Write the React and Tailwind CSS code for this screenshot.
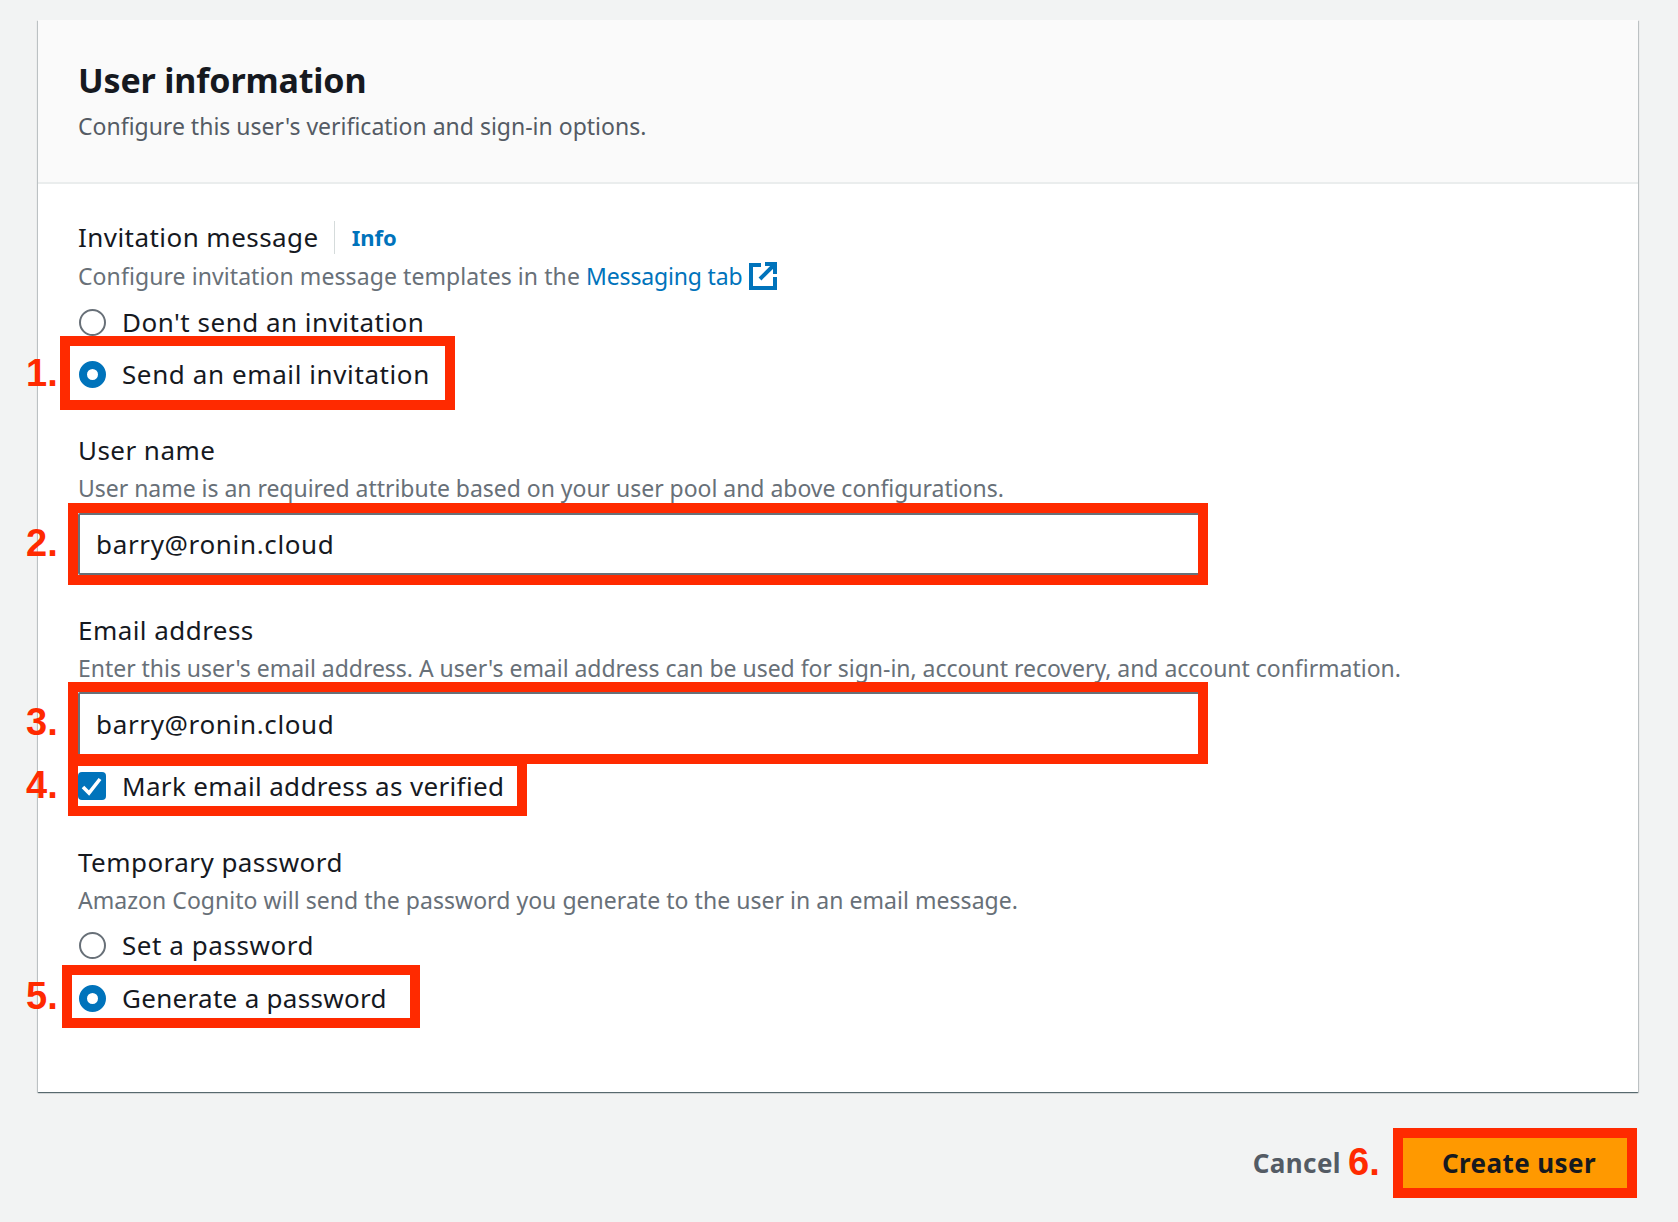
const font = "[font-family:'Noto_Sans',sans-serif]";

function Radio({ checked, label, className }) {
  return (
    <div className={`flex items-center h-9 text-[#16191f] text-[26px] ${className}`}>
      {checked ? (
        <span className="ml-px w-[27px] h-[27px] rounded-full border-[8px] border-[#0073bb] bg-white shrink-0" />
      ) : (
        <span className="ml-px w-[27px] h-[27px] rounded-full border-2 border-[#687078] bg-white shrink-0" />
      )}
      <span className="ml-4 leading-9">{label}</span>
    </div>
  );
}

function Label({ children, className }) {
  return <div className={`h-9 text-[#16191f] text-[26px] leading-9 tracking-[0.45px] ${className}`}>{children}</div>;
}

function Desc({ children, className }) {
  return <div className={`h-9 text-[#687078] text-[23px] leading-9 ${className}`}>{children}</div>;
}

function Field({ value, className }) {
  return (
    <div className={`w-[1122px] border-2 border-[#687078] rounded-[2px] bg-white pl-4 flex items-center text-[#16191f] text-[26px] tracking-[0.65px] ${className}`}>
      {value}
    </div>
  );
}

function Frame({ className }) {
  return <div className={`absolute border-[10px] border-[#ff2a00] ${className}`} />;
}

function Num({ children, className }) {
  return (
    <div className={`absolute text-[#ff2a00] font-bold text-[38px] leading-none [font-family:'Liberation_Sans',sans-serif] ${className}`}>
      {children}
    </div>
  );
}

export default function App() {
  return (
    <div className={`relative min-h-[1222px] bg-[#f2f3f3] pt-5 pl-[38px] pr-10 ${font}`}>
      <section className="bg-white shadow-[0_1px_1px_0_rgba(0,28,36,0.5),1px_1px_1px_0_rgba(0,28,36,0.15),-1px_1px_1px_0_rgba(0,28,36,0.15)]">
        <header className="h-[164px] bg-[#fafafa] border-b-2 border-[#eaeded] px-10 pt-[38px]">
          <h1 className="text-[34px] leading-[44px] font-bold text-[#16191f] tracking-[-0.15px]">User information</h1>
          <p className="mt-[6px] text-[23px] leading-9 text-[#545b64]">Configure this user's verification and sign-in options.</p>
        </header>
        <div className="px-10 pt-[35px] pb-[76px]">
          <Label className="flex items-center">
            <span>Invitation message</span>
            <span className="ml-[15px] mr-[17px] w-px h-[33px] bg-[#d5dbdb]" />
            <span className="text-[#0073bb] font-bold text-[22px] tracking-normal">Info</span>
          </Label>
          <Desc className="mt-[3px] flex items-center">
            <span className="tracking-[0.08px]">Configure invitation message templates in the&nbsp;</span>
            <span className="text-[#0073bb] tracking-[-0.16px]">Messaging tab</span>
            <svg className="ml-[7px] w-7 h-7" viewBox="0 0 28 28" fill="none" stroke="#0073bb" strokeWidth="4">
              <path d="M12 3H2v23h24V15" />
              <path d="M25 3L11 17" />
              <path d="M16 2h10v10" />
            </svg>
          </Desc>
          <Radio className="mt-[10px] tracking-[0.5px]" label="Don't send an invitation" />
          <Radio className="mt-4 tracking-[0.6px]" checked label="Send an email invitation" />

          <Label className="mt-[40px]">User name</Label>
          <Desc className="mt-[2px] tracking-[-0.03px]">User name is an required attribute based on your user pool and above configurations.</Desc>
          <Field className="mt-[7px] h-[62px]" value="barry@ronin.cloud" />

          <Label className="mt-[37px]">Email address</Label>
          <Desc className="mt-[2px] tracking-[-0.03px]">Enter this user's email address. A user's email address can be used for sign-in, account recovery, and account confirmation.</Desc>
          <Field className="mt-[6px] h-[64px]" value="barry@ronin.cloud" />

          <div className="mt-3 flex items-center h-9">
            <span className="w-7 h-7 rounded-[4px] bg-[#0073bb] shrink-0">
              <svg className="w-7 h-7" viewBox="0 0 28 28" fill="none" stroke="white" strokeWidth="3.6">
                <path d="M5 15l6 6L22 7" />
              </svg>
            </span>
            <span className="ml-4 text-[#16191f] text-[26px] leading-9 tracking-[0.35px]">Mark email address as verified</span>
          </div>

          <Label className="mt-[40px]">Temporary password</Label>
          <Desc className="mt-[2px] tracking-[0.04px]">Amazon Cognito will send the password you generate to the user in an email message.</Desc>
          <Radio className="mt-[9px] tracking-[0.55px]" label="Set a password" />
          <Radio className="mt-[17px] tracking-[0.3px]" checked label="Generate a password" />
        </div>
      </section>

      <footer className="mt-[46px] flex items-center justify-end pr-[11px]">
        <span className="mr-[62px] pt-px text-[26px] font-bold text-[#545b64] tracking-[0.4px]">Cancel</span>
        <button className="w-[224px] h-[50px] pl-2 pt-px bg-[#ff9900] text-[#16191f] text-[26px] font-bold tracking-[0.4px]">Create user</button>
      </footer>

      <Frame className="left-[60px] top-[336px] w-[395px] h-[74px]" />
      <Frame className="left-[68px] top-[756px] w-[459px] h-[60px]" />
      <Frame className="left-[68px] top-[503px] w-[1140px] h-[82px]" />
      <Frame className="left-[68px] top-[682px] w-[1140px] h-[82px]" />
      <Frame className="left-[62px] top-[965px] w-[358px] h-[63px]" />
      <Frame className="left-[1393px] top-[1128px] w-[244px] h-[70px]" />

      <Num className="left-[26px] top-[354px]">1.</Num>
      <Num className="left-[26px] top-[524px]">2.</Num>
      <Num className="left-[26px] top-[703px]">3.</Num>
      <Num className="left-[26px] top-[766px]">4.</Num>
      <Num className="left-[26px] top-[977px]">5.</Num>
      <Num className="left-[1348px] top-[1143px]">6.</Num>
    </div>
  );
}
